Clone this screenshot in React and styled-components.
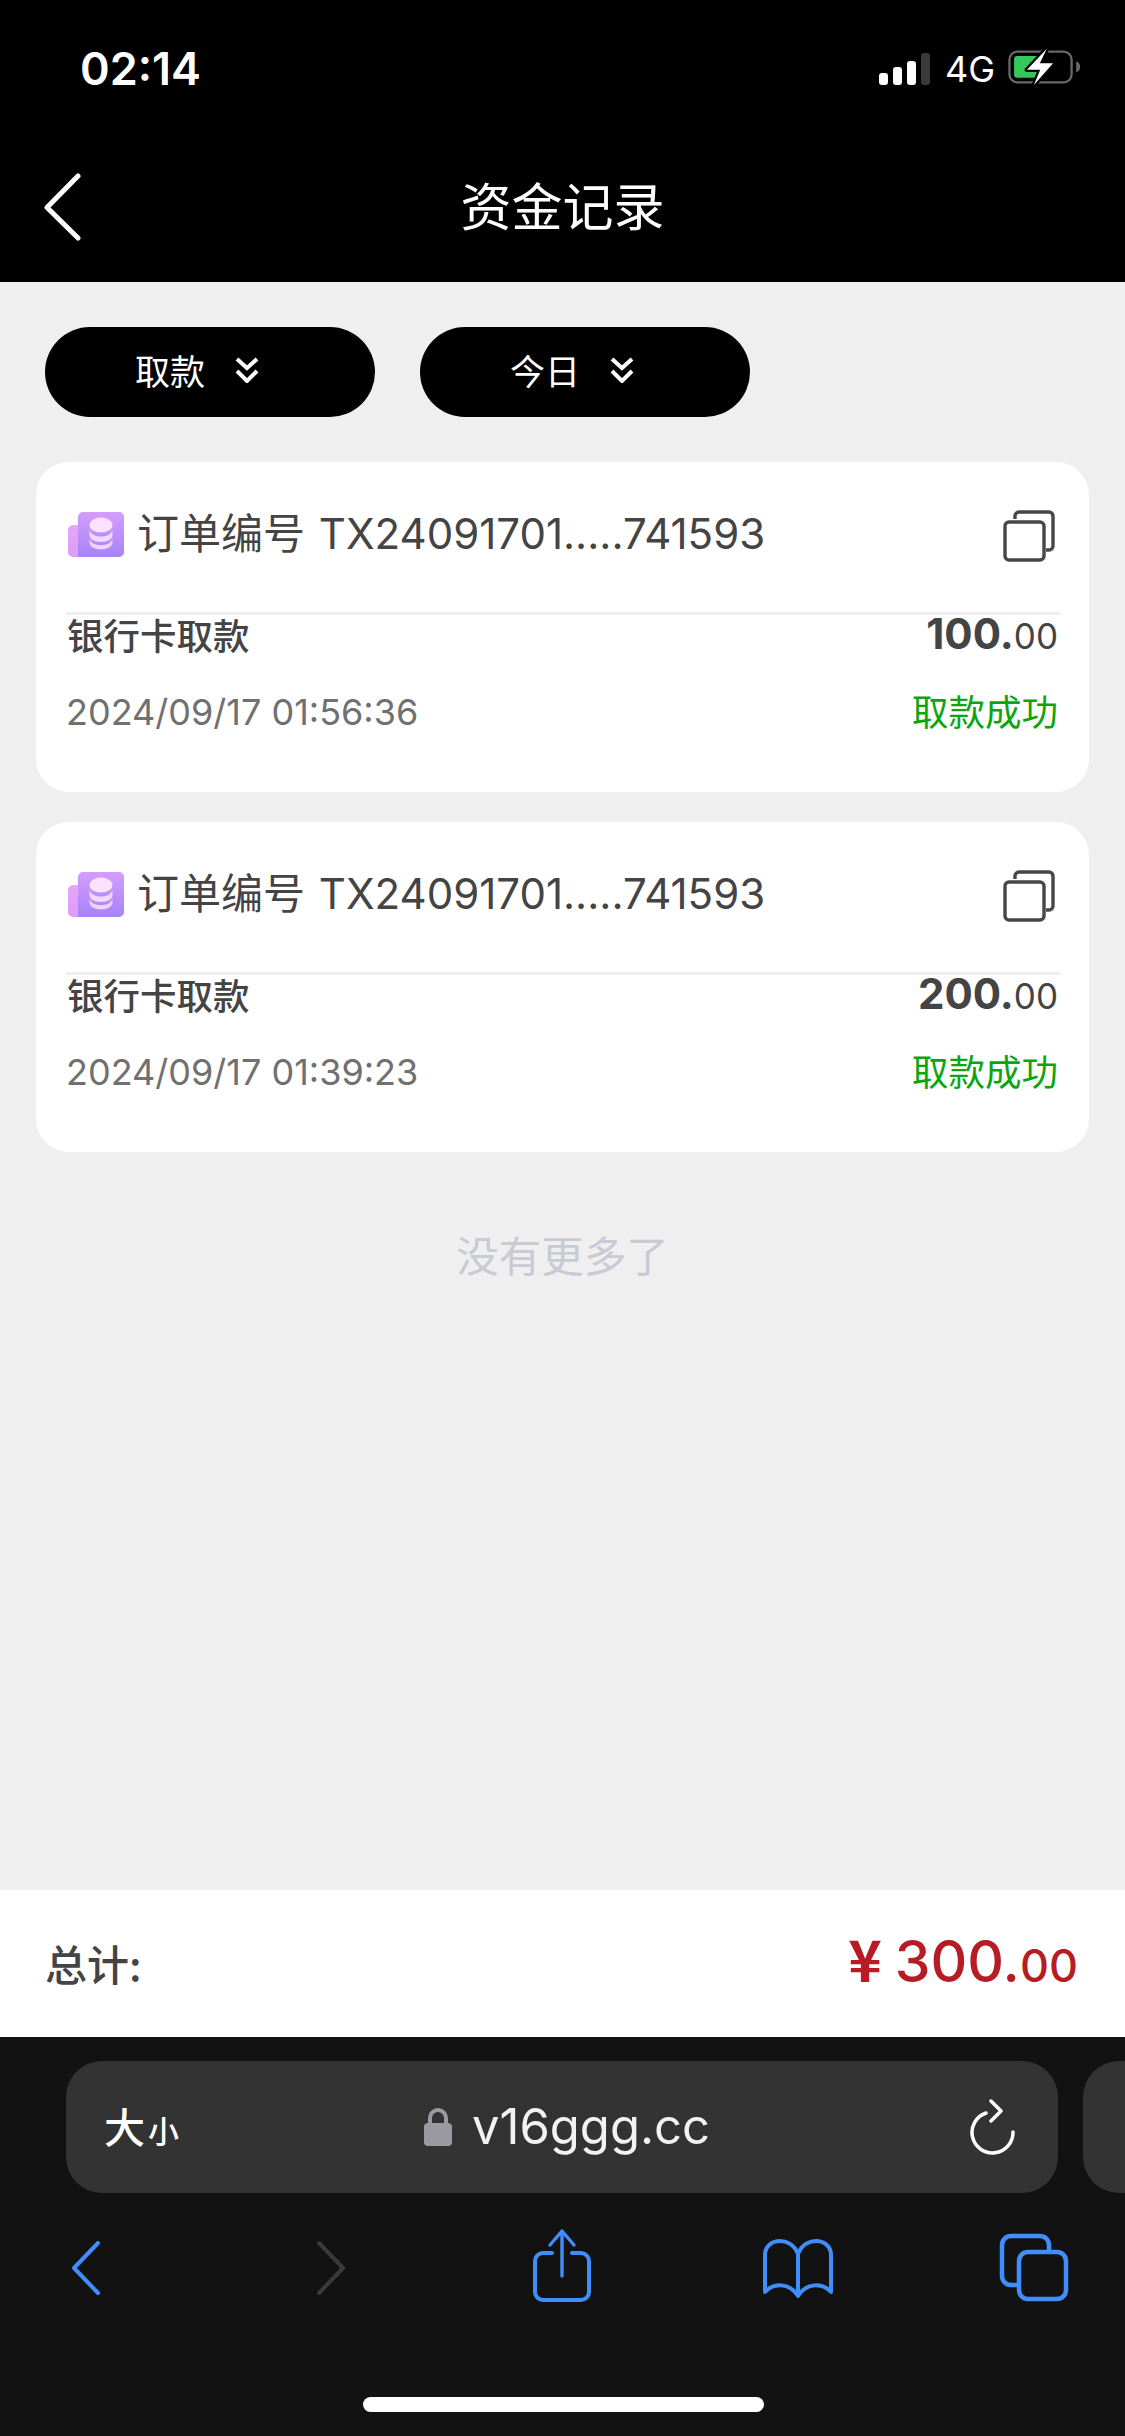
import React from "react";
import styled, { createGlobalStyle } from "styled-components";

const Global = createGlobalStyle`
  html, body { margin: 0; padding: 0; background: #efefef; }
  * { box-sizing: border-box; }
  body { font-family: Inter, "Noto Sans CJK SC", sans-serif; }
`;
const Page = styled.div`
  width: 1125px; height: 2436px; display: flex; flex-direction: column;
  overflow: hidden; background: #efefef;
`;
const Header = styled.header`background: #000; color: #fff; height: 282px; display: flex; flex-direction: column;`;
const StatusBar = styled.div`
  height: 132px; padding: 46px 43px 0 80px; display: flex; justify-content: space-between; align-items: flex-start;
`;
const Time = styled.span`font: 600 45px/46px Inter, sans-serif; letter-spacing: 0;`;
const StatusRight = styled.div`display: flex; align-items: center; height: 38px; margin-top: 2px;`;
const Signal = styled.div`display: flex; align-items: flex-end; gap: 5px; height: 32px; margin-top: 4px;`;
const Bar = styled.i`
  display: block; width: 9px; height: ${p => p.$h}px; border-radius: 3px;
  background: ${p => (p.$off ? "#3a3a3a" : "#fff")};
`;
const NetLabel = styled.span`font: 400 36px/38px Inter, sans-serif; margin: 4px 10px 0 15px;`;
const NavBar = styled.div`flex: 1; display: flex; align-items: center; position: relative; justify-content: center;`;
const NavTitle = styled.h1`margin: -6px 0 0; font: 400 51px/60px "Noto Sans CJK SC", sans-serif; color: #fff;`;
const NavBack = styled.svg`position: absolute; left: 44px; top: 41px;`;

const Main = styled.main`flex: 1; display: flex; flex-direction: column;`;
const Filters = styled.div`display: flex; gap: 45px; padding: 45px 45px 45px;`;
const Pill = styled.button`
  width: 330px; height: 90px; border: 0; border-radius: 45px; background: #000; color: #fff;
  display: flex; align-items: center; gap: 30px; padding: 0 0 4px 90px;
  font: 400 35px/40px "Noto Sans CJK SC", sans-serif;
`;
const List = styled.div`display: flex; flex-direction: column; gap: 30px; padding: 0 36px;`;
const Card = styled.article`
  height: 330px; background: #fff; border-radius: 33px; padding: 0 29px 0 30px;
  display: flex; flex-direction: column;
`;
const CardHead = styled.div`
  height: 153px; flex: none; display: flex; align-items: center; gap: 13px; padding: 0 5px 6px 2px;
  border-bottom: 3px solid #eee;
`;
const OrderNo = styled.span`
  flex: 1; font: 400 42px/50px Inter, "Noto Sans CJK SC", sans-serif; color: #444; white-space: nowrap; word-spacing: 2px;
`;
const RowTop = styled.div`
  display: flex; justify-content: space-between; align-items: center; height: 44px; margin-top: -2px; padding: 0 2px 0 1px;
`;
const RowBottom = styled.div`
  display: flex; justify-content: space-between; align-items: center; height: 44px; margin-top: 33px; padding: 0 2px 0 0;
`;
const Kind = styled.span`font: 500 36.500px/44px "Noto Sans CJK SC", sans-serif; color: #444;`;
const Amount = styled.span`font: 700 42px/44px Inter, sans-serif; color: #444;`;
const Cents = styled.span`font-weight: 400; font-size: 35px;`;
const DateText = styled.span`font: 400 36px/44px Inter, sans-serif; color: #707070;`;
const Status = styled.span`font: 400 36.500px/44px "Noto Sans CJK SC", sans-serif; color: #0aa60f; margin-top: -2px;`;
const NoMore = styled.div`
  text-align: center; margin-top: 77px; font: 400 42.500px/50px "Noto Sans CJK SC", sans-serif; color: #c8cad4;
`;
const TotalBar = styled.div`
  flex: none; height: 147px; background: #fff; display: flex; justify-content: space-between; align-items: center;
  padding: 0 47px 0 45px;
`;
const TotalLabel = styled.span`font: 500 42px/50px "Noto Sans CJK SC", sans-serif; color: #444; margin-top: -1px;`;
const TotalValue = styled.span`font: 500 57px/70px Inter, sans-serif; color: #b71c25; margin-top: -5px;`;
const TotalCents = styled.span`font-size: 45px;`;
const Currency = styled.span`font-family: "Noto Sans CJK SC", sans-serif; font-weight: 700; margin-right: 13px;`;

const Browser = styled.div`flex: none; height: 399px; background: #121212; display: flex; flex-direction: column; padding-top: 24px;`;
const UrlRow = styled.div`display: flex; gap: 25px; padding-left: 66px; flex: none;`;
const UrlBar = styled.div`
  width: 992px; height: 132px; flex: none; border-radius: 36px; background: #333; color: #fff;
  display: grid; grid-template-columns: 1fr auto 1fr; align-items: center; padding: 0 42px 0 38px;
`;
const NextTab = styled.div`flex: 1; height: 132px; background: #333; border-radius: 36px 0 0 36px;`;
const SizeBtn = styled.span`font: 500 41px/48px "Noto Sans CJK SC", sans-serif; display: flex; align-items: baseline;`;
const SizeSmall = styled.span`font-size: 31px; margin-left: 3px;`;
const Site = styled.div`display: flex; align-items: center; gap: 20px; margin-left: 14px;`;
const SiteText = styled.span`font: 400 49px/56px Inter, sans-serif; color: #f2f2f2;`;
const Reload = styled.svg`justify-self: end;`;
const Toolbar = styled.div`display: flex; align-items: flex-start; height: 204px; padding-left: 72px; position: relative;`;
const ToolIcon = styled.svg`flex: none; margin-top: ${p => p.$top}px; margin-left: ${p => p.$left || 0}px;`;
const HomeBar = styled.div`
  position: absolute; left: 363px; top: 204px; width: 401px; height: 15px; border-radius: 8px; background: #fff;
`;

const DoubleChevron = () => (
  <svg width="24" height="26" viewBox="0 0 24 26" fill="none" stroke="#fff" strokeWidth="4">
    <path d="M2 2l10 9 10-9M2 14l10 10 10-10" />
  </svg>
);
const Coin = () => (
  <svg width="56" height="45" viewBox="0 0 56 45" style={{ flex: "none" }}>
    <defs>
      <linearGradient id="cf" x1="0" y1="0" x2="0" y2="1"><stop offset="0" stopColor="#d49dfd" /><stop offset="1" stopColor="#a583f7" /></linearGradient>
      <linearGradient id="cb" x1="0" y1="0" x2="0" y2="1"><stop offset="0" stopColor="#e8a6f8" /><stop offset="1" stopColor="#dc9cf9" /></linearGradient>
    </defs>
    <rect x="0" y="13" width="30" height="32" rx="5" fill="url(#cb)" />
    <path d="M15 0H51a5 5 0 0 1 5 5V40a5 5 0 0 1-5 5H10V5a5 5 0 0 1 5-5Z" fill="url(#cf)" />
    <ellipse cx="33" cy="13" rx="11.500" ry="7.500" fill="#fbe3fe" />
    <path d="M21.500 18c2 5 6 6.500 11.500 6.500s9.500-1.500 11.500-6.500v5c0 4-5 7-11.500 7s-11.500-3-11.500-7Z" fill="#f6d8fd" />
    <path d="M21.500 27c2 4.500 6 6 11.500 6s9.500-1.500 11.500-6v3.500c0 4-5 7-11.500 7s-11.500-3-11.500-7Z" fill="#f0d0fc" />
  </svg>
);
const Copy = () => (
  <svg width="52" height="52" viewBox="0 0 52 52" fill="none" stroke="#474747" strokeWidth="3.400" style={{ flex: "none", marginTop: 4 }}>
    <path d="M12 9V6a4 4 0 0 1 4-4h30a4 4 0 0 1 4 4v30a4 4 0 0 1-4 4h-3" />
    <rect x="2" y="12" width="39" height="38" rx="4" />
  </svg>
);

const records = [
  { int: "100.", date: "2024/09/17 01:56:36" },
  { int: "200.", date: "2024/09/17 01:39:23" },
];

export default function App() {
  return (
    <Page>
      <Global />
      <Header>
        <StatusBar>
          <Time>02:14</Time>
          <StatusRight>
            <Signal>
              <Bar $h={12} /><Bar $h={18} /><Bar $h={24} /><Bar $h={32} $off />
            </Signal>
            <NetLabel>4G</NetLabel>
            <svg width="77" height="38" viewBox="440 60 230 115" fill="none">
              <rect x="452" y="71" width="188" height="93" rx="24" stroke="#686868" strokeWidth="7" />
              <rect x="466" y="84" width="90" height="66" rx="10" fill="#34c759" />
              <path d="M565 62 505 126 545 126 526 172 584 106 544 106Z" fill="#000" stroke="#000" strokeWidth="14" strokeLinejoin="round" />
              <path d="M565 62 505 126 545 126 526 172 584 106 544 106Z" fill="#fff" />
              <path d="M654 100c8 3 12 9 12 17s-4 14-12 17Z" fill="#686868" />
            </svg>
          </StatusRight>
        </StatusBar>
        <NavBar>
          <NavTitle>资金记录</NavTitle>
          <NavBack width="38" height="68" viewBox="0 0 38 68" fill="none" stroke="#fff" strokeWidth="5" strokeLinecap="round" strokeLinejoin="round">
            <path d="M34 3 3 34.500 34 65" />
          </NavBack>
        </NavBar>
      </Header>
      <Main>
        <Filters>
          <Pill>取款<DoubleChevron /></Pill>
          <Pill>今日<DoubleChevron /></Pill>
        </Filters>
        <List>
          {records.map(r => (
            <Card key={r.date}>
              <CardHead>
                <Coin />
                <OrderNo>订单编号 TX24091701.....741593</OrderNo>
                <Copy />
              </CardHead>
              <RowTop>
                <Kind>银行卡取款</Kind>
                <Amount>{r.int}<Cents>00</Cents></Amount>
              </RowTop>
              <RowBottom>
                <DateText>{r.date}</DateText>
                <Status>取款成功</Status>
              </RowBottom>
            </Card>
          ))}
        </List>
        <NoMore>没有更多了</NoMore>
      </Main>
      <TotalBar>
        <TotalLabel>总计:</TotalLabel>
        <TotalValue><Currency>¥</Currency>300.<TotalCents>00</TotalCents></TotalValue>
      </TotalBar>
      <Browser>
        <UrlRow>
          <UrlBar>
            <SizeBtn>大<SizeSmall>小</SizeSmall></SizeBtn>
            <Site>
              <svg width="28" height="38" viewBox="0 0 28 38">
                <path d="M6 17V10a8 8 0 0 1 16 0v7" fill="none" stroke="#9a9aa0" strokeWidth="4" />
                <rect x="0" y="15" width="28" height="23" rx="4" fill="#9a9aa0" />
              </svg>
              <SiteText>v16ggg.cc</SiteText>
            </Site>
            <Reload width="46" height="56" viewBox="0 0 46 56" fill="none" stroke="#fff" strokeWidth="3.500" strokeLinecap="round" strokeLinejoin="round">
              <path d="M16 14A20.500 20.500 0 1 0 43 33" />
              <path d="M21 2l10 10-10 10" />
            </Reload>
          </UrlBar>
          <NextTab />
        </UrlRow>
        <Toolbar>
          <ToolIcon $top={48} width="28" height="54" viewBox="0 0 28 54" fill="none" stroke="#3f8efc" strokeWidth="4" strokeLinecap="round" strokeLinejoin="round">
            <path d="M26 2 2 27l24 25" />
          </ToolIcon>
          <ToolIcon $top={48} $left={216} width="29" height="54" viewBox="0 0 29 54" fill="none" stroke="#3a3a3a" strokeWidth="4" strokeLinecap="round" strokeLinejoin="round">
            <path d="M3 2l24 25L3 52" />
          </ToolIcon>
          <ToolIcon $top={35} $left={187} width="60" height="76" viewBox="0 0 60 76" fill="none" stroke="#3f8efc" strokeWidth="4" strokeLinecap="round" strokeLinejoin="round">
            <path d="M20 25H11a8 8 0 0 0-8 8V64a8 8 0 0 0 8 8H49a8 8 0 0 0 8-8V33a8 8 0 0 0-8-8H40" />
            <path d="M30 3V48M18 17 30 3l12 14" strokeWidth="3.400" />
          </ToolIcon>
          <ToolIcon $top={45} $left={169} width="74" height="62" viewBox="0 0 74 62" fill="none" stroke="#3f8efc" strokeWidth="4" strokeLinejoin="round">
            <path d="M37 16C33 6 25 3 19 3 10 3 4 9 4 17V54C12 45 28 44 37 58 46 44 62 45 70 54V17C70 9 64 3 55 3 49 3 41 6 37 16ZM37 16V58" />
          </ToolIcon>
          <ToolIcon $top={40} $left={164} width="72" height="70" viewBox="0 0 72 70" fill="none" stroke="#3f8efc" strokeWidth="4.500">
            <path d="M50 17V12a9 9 0 0 0-9-9H12a9 9 0 0 0-9 9V43a9 9 0 0 0 9 9h7" />
            <rect x="20" y="19" width="47" height="47" rx="9" />
          </ToolIcon>
          <HomeBar />
        </Toolbar>
      </Browser>
    </Page>
  );
}
